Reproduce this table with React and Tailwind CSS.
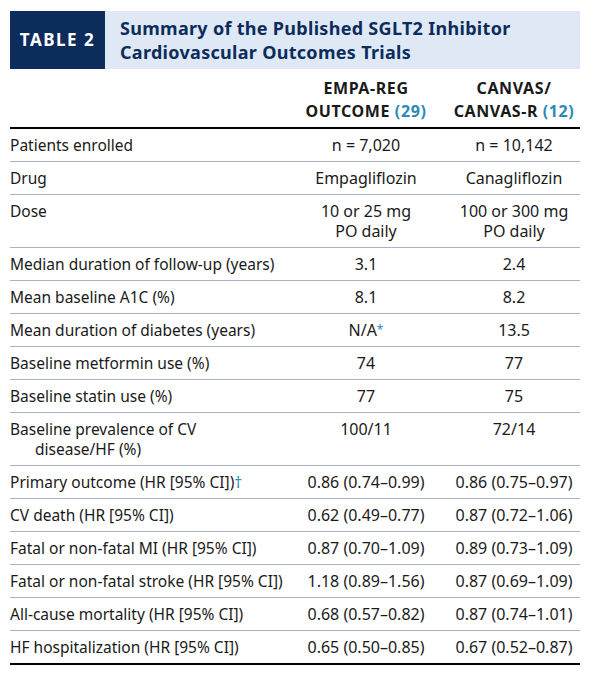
const rows = [
  { label: 'Patients enrolled', a: 'n = 7,020', b: 'n = 10,142' },
  { label: 'Drug', a: 'Empagliflozin', b: 'Canagliflozin' },
  { label: 'Dose', a: ['10 or 25 mg', 'PO daily'], b: ['100 or 300 mg', 'PO daily'] },
  { label: 'Median duration of follow-up (years)', a: '3.1', b: '2.4' },
  { label: 'Mean baseline A1C (%)', a: '8.1', b: '8.2' },
  { label: 'Mean duration of diabetes (years)', a: 'N/A', aMark: '*', b: '13.5' },
  { label: 'Baseline metformin use (%)', a: '74', b: '77' },
  { label: 'Baseline statin use (%)', a: '77', b: '75' },
  { label: ['Baseline prevalence of CV', 'disease/HF (%)'], a: '100/11', b: '72/14' },
  { label: 'Primary outcome (HR [95% CI])', mark: '†', a: '0.86 (0.74–0.99)', b: '0.86 (0.75–0.97)' },
  { label: 'CV death (HR [95% CI])', a: '0.62 (0.49–0.77)', b: '0.87 (0.72–1.06)' },
  { label: 'Fatal or non-fatal MI (HR [95% CI])', a: '0.87 (0.70–1.09)', b: '0.89 (0.73–1.09)' },
  { label: 'Fatal or non-fatal stroke (HR [95% CI])', a: '1.18 (0.89–1.56)', b: '0.87 (0.69–1.09)' },
  { label: 'All-cause mortality (HR [95% CI])', a: '0.68 (0.57–0.82)', b: '0.87 (0.74–1.01)' },
  { label: 'HF hospitalization (HR [95% CI])', a: '0.65 (0.50–0.85)', b: '0.67 (0.52–0.87)' },
]

function Cell({ value, mark }) {
  const lines = Array.isArray(value) ? value : [value]
  return (
    <div className="text-center whitespace-nowrap">
      {lines.map((l, i) => (
        <div key={i}>
          {l}
          {mark && i === 0 && <span className="text-[#2a8ab8] text-[12px] align-top">{mark}</span>}
        </div>
      ))}
    </div>
  )
}

export default function App() {
  return (
    <div className="bg-white w-[600px] h-[677px] pt-[11px] pl-[10px] font-['Noto_Sans',sans-serif] text-[#1a1a1a]">
      <div className="w-[570px]">
        {/* Title band */}
        <div className="flex h-[58px]">
          <div className="w-[95px] bg-[#0c2c5c] flex items-center justify-center text-white font-bold text-[17px] tracking-[1.5px]">
            TABLE 2
          </div>
          <div className="flex-1 bg-[#dfe9f6] pl-[15px] pt-[5px] text-[#0c2c5c] font-bold text-[18px] tracking-[0.3px] leading-[24px]">
            <div>Summary of the Published SGLT2 Inhibitor</div>
            <div>Cardiovascular Outcomes Trials</div>
          </div>
        </div>

        {/* Column headers */}
        <div className="grid grid-cols-[280px_152px_138px] h-[60px] pt-[8px] border-b-2 border-black font-bold text-[16px] tracking-[0.6px] leading-[23px]">
          <div></div>
          <div className="text-center">
            <div>EMPA-REG</div>
            <div>OUTCOME <span className="text-[#2a8ab8]">(29)</span></div>
          </div>
          <div className="text-center pl-[6px]">
            <div>CANVAS/</div>
            <div>CANVAS-R <span className="text-[#2a8ab8]">(12)</span></div>
          </div>
        </div>

        {/* Body */}
        {rows.map((r, i) => {
          const label = Array.isArray(r.label) ? r.label : [r.label]
          return (
            <div
              key={i}
              className={`grid grid-cols-[280px_152px_138px] py-[6px] text-[16px] leading-[20px] ${
                i === rows.length - 1 ? 'border-b-2 border-black' : 'border-b-[1.5px] border-[#a7b2cb]'
              }`}
            >
              <div className="whitespace-nowrap text-[15.5px]">
                {label.map((l, j) => (
                  <div key={j} className={j > 0 ? 'pl-[25px]' : ''}>
                    {l}
                    {r.mark && j === 0 && <span className="text-[#2a8ab8]">{r.mark}</span>}
                  </div>
                ))}
              </div>
              <Cell value={r.a} mark={r.aMark} />
              <div className="pl-[6px]">
                <Cell value={r.b} />
              </div>
            </div>
          )
        })}
      </div>
    </div>
  )
}
